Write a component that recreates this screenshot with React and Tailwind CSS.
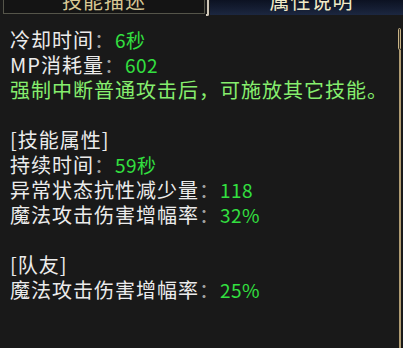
import React from 'react';

const lines = [
  { label: '冷却时间', value: '6秒' },
  { label: 'MP消耗量', value: '602' },
  { note: '强制中断普通攻击后，可施放其它技能。' },
  { blank: true },
  { head: '[技能属性]' },
  { label: '持续时间', value: '59秒' },
  { label: '异常状态抗性减少量', value: '118' },
  { label: '魔法攻击伤害增幅率', value: '32%' },
  { blank: true },
  { head: '[队友]' },
  { label: '魔法攻击伤害增幅率', value: '25%' },
];

export default function App() {
  return (
    <div
      className="w-[403px] h-[348px] bg-[#191919] flex flex-col overflow-hidden"
      style={{ fontFamily: '"Noto Sans CJK SC", "Noto Sans", sans-serif' }}
    >
      {/* tabs */}
      <div className="h-[16px] flex shrink-0 overflow-hidden">
        <div className="w-[210px] flex">
          <div className="ml-[3px] w-[202px] h-[14px] border border-t-0 border-[#55554a] bg-[#141414] flex justify-center overflow-hidden">
            <span className="text-[20px] leading-[20px] mt-[-9px] text-[#d8c894] tracking-[1px]">技能描述</span>
          </div>
          <div className="w-[3px] h-[16px] border-r-2 border-b-2 border-[#cfc7b8] rounded-br-[2px] ml-[1px]" />
        </div>
        <div className="flex-1 h-[15px] bg-gradient-to-b from-[#0c1222] to-[#1c2740] flex justify-center overflow-hidden">
          <span className="text-[20px] leading-[20px] mt-[-9px] text-[#f2ebc8] tracking-[1px] ml-[10px]">属性说明</span>
        </div>
      </div>

      {/* body */}
      <div className="flex-1 flex">
        <div className="flex-1 pl-[10px] pt-[11px] text-[20px] leading-[25px] tracking-[1px] text-[#ececec]">
          {lines.map((l, i) => {
            if (l.blank) return <div key={i} className="h-[25px]" />;
            if (l.head) return <div key={i}>{l.head}</div>;
            if (l.note)
              return (
                <div key={i} className="text-[#86ee6e] whitespace-nowrap">
                  {l.note}
                </div>
              );
            return (
              <div key={i} className="whitespace-nowrap">
                {l.label}
                <span className="text-[#a0a0a0]">：</span>
                <span className="text-[#33e040] text-[19px] tracking-[0.5px]">{l.value}</span>
              </div>
            );
          })}
        </div>
        <div className="w-[5px] pt-[12px] flex flex-col items-start">
          <div className="w-[3px] h-[22px] border border-[#c9b487] bg-[#3a3426] rounded-[2px]" />
          <div className="w-[2px] ml-[0.5px] flex-1 bg-[#b09c72]" />
        </div>
      </div>
    </div>
  );
}
